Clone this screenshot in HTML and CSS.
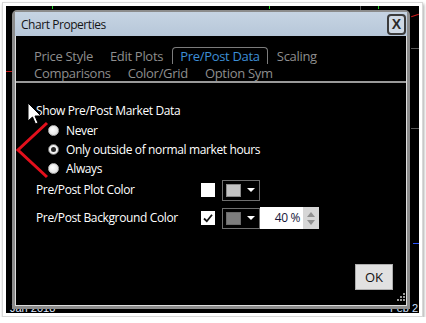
FILE: index.html
```html
<!DOCTYPE html>
<html lang="en">
<head>
    <meta charset="UTF-8">
    <meta name="viewport" content="width=device-width, initial-scale=1.0">
    <title>Chart Properties</title>
    <link rel="stylesheet" href="styles.css">
</head>
<body>
    <div class="frame">
        <div class="shot">
            <!-- chart behind the dialog -->
            <span class="mark tick" style="left: 46px;"></span>
            <span class="mark tick" style="left: 263px;"></span>
            <span class="mark tick" style="left: 372px;"></span>
            <span class="mark grid-v" style="left: 354px;"></span>
            <span class="mark red-left"></span>
            <span class="mark red-right"></span>
            <span class="mark grid-h" style="top: 42px;"></span>
            <span class="mark grid-h" style="top: 122px;"></span>
            <span class="mark blue-right"></span>
            <span class="axis-label jan">Jan 2018</span>
            <span class="axis-label feb">Feb 2</span>

            <div class="dialog">
                <div class="titlebar">
                    <span class="title">Chart Properties</span>
                    <span class="close">X</span>
                </div>
                <div class="body">
                    <div class="tabs">
                        <div class="tab-row">
                            <span class="tab">Price Style</span>
                            <span class="tab">Edit Plots</span>
                            <span class="tab active">Pre/Post Data</span>
                            <span class="tab">Scaling</span>
                        </div>
                        <div class="tab-row">
                            <span class="tab">Comparisons</span>
                            <span class="tab">Color/Grid</span>
                            <span class="tab">Option Sym</span>
                        </div>
                    </div>

                    <div class="panel">
                        <div class="heading">Show Pre/Post Market Data</div>
                        <div class="radios">
                            <div class="radio"><span class="dot"></span>Never</div>
                            <div class="radio"><span class="dot checked"></span>Only outside of normal market hours</div>
                            <div class="radio"><span class="dot"></span>Always</div>
                        </div>

                        <div class="color-row">
                            <span class="label">Pre/Post Plot Color</span>
                            <span class="check"></span>
                            <span class="picker"><span class="swatch light"></span><span class="arrow"></span></span>
                        </div>
                        <div class="color-row">
                            <span class="label">Pre/Post Background Color</span>
                            <span class="check">
                                <svg width="12" height="12" viewBox="0 0 12 12"><path d="M2 6.5 L4.8 9.2 L10 2.8" fill="none" stroke="#111" stroke-width="1.8"/></svg>
                            </span>
                            <span class="picker"><span class="swatch dark"></span><span class="arrow"></span></span>
                            <span class="spin">
                                <span class="spin-value">40 %</span>
                                <span class="spin-btns"><span class="up"></span><span class="down"></span></span>
                            </span>
                        </div>

                        <div class="actions">
                            <button class="ok">OK</button>
                        </div>
                    </div>

                    <svg class="grip" width="8" height="8" viewBox="0 0 8 8">
                        <rect x="6" y="0" width="2" height="2" fill="#9a9a9a"/>
                        <rect x="3" y="3" width="2" height="2" fill="#9a9a9a"/>
                        <rect x="6" y="3" width="2" height="2" fill="#9a9a9a"/>
                        <rect x="0" y="6" width="2" height="2" fill="#9a9a9a"/>
                        <rect x="3" y="6" width="2" height="2" fill="#9a9a9a"/>
                        <rect x="6" y="6" width="2" height="2" fill="#9a9a9a"/>
                    </svg>
                </div>
            </div>

            <!-- annotation and mouse pointer on top -->
            <svg class="overlay" width="413" height="307" viewBox="0 0 413 307">
                <polyline points="41,117 12,144 41,171" fill="none" stroke="#e3101c" stroke-width="3"/>
                <path d="M22 97 L22 115 L26.5 111 L29.5 118 L32 117 L29 110 L35 110 Z" fill="#fff" stroke="#000" stroke-width="1"/>
            </svg>
        </div>
    </div>
</body>
</html>
```

FILE: styles.css
```css
body {
    margin: 0;
    background-color: #fff;
    font-family: "Open Sans", "Noto Sans", sans-serif;
}

.frame {
    margin: 2px 0 0 2px;
    width: 413px;
    padding: 3px;
    border: 1px solid #d8d8d8;
    background-color: #fff;
    box-shadow: 1px 2px 3px rgba(0, 0, 0, 0.35);
}

.shot {
    position: relative;
    height: 307px;
    padding: 4px 0 0 6px;
    box-sizing: border-box;
    background-color: #000;
    overflow: hidden;
}

/* chart pieces */
.mark {
    position: absolute;
    display: block;
}

.tick {
    top: 0;
    width: 1px;
    height: 3px;
    background-color: #1fd21f;
}

.grid-v {
    top: 0;
    width: 1px;
    height: 5px;
    background-color: #555;
}

.grid-h {
    right: 0;
    width: 8px;
    height: 1px;
    background-color: #5a5a5a;
}

.red-left {
    left: 0;
    top: 65px;
    width: 8px;
    height: 1px;
    background-color: #c81818;
}

.red-right {
    right: 0;
    top: 9px;
    width: 8px;
    height: 1px;
    background-color: #d01c1c;
    transform: rotate(-18deg);
}

.blue-right {
    right: 0;
    top: 237px;
    width: 6px;
    height: 1px;
    background-color: #2a55ff;
}

.axis-label {
    position: absolute;
    font-family: "Liberation Sans", sans-serif;
    font-size: 11px;
    line-height: 12px;
    color: #fff;
}

.jan {
    left: 4px;
    top: 296px;
    color: #dfe6ff;
}

.feb {
    left: 384px;
    top: 296px;
    color: #cfe0ff;
}

/* dialog window */
.dialog {
    position: relative;
    z-index: 1;
    width: 392px;
    border: 3px solid #8c8c8c;
    border-top-width: 2px;
    border-radius: 5px 5px 0 0;
    background-color: #000;
}

.titlebar {
    height: 24px;
    display: flex;
    align-items: center;
    justify-content: space-between;
    padding: 0 1px 0 6px;
    background: linear-gradient(#c6d4e3, #b7c7d9);
}

.title {
    font-size: 12px;
    letter-spacing: -0.45px;
    color: #151515;
}

.close {
    width: 15px;
    height: 17px;
    border: 2px solid #3b3b3b;
    border-radius: 4px;
    background-color: #cfd9e4;
    font-family: "Liberation Sans", sans-serif;
    font-weight: bold;
    font-size: 14px;
    line-height: 17px;
    text-align: center;
    color: #2a2a2a;
}

.body {
    position: relative;
    height: 269px;
    border: 1px solid #dcdcdc;
    border-top: none;
}

.tabs {
    padding-top: 11px;
    border-bottom: 2px solid #9a9a9a;
}

.tab-row {
    display: flex;
    gap: 1px;
    padding-left: 10px;
}

.tab {
    padding: 0 7px;
    border: 1px solid transparent;
    border-bottom: none;
    border-radius: 4px 4px 0 0;
    font-size: 13px;
    letter-spacing: -0.3px;
    line-height: 16px;
    color: #8e8e8e;
}

.tab.active {
    border-color: #7c7c7c;
    color: #3d8fd6;
}

.panel {
    padding: 20px 13px 0 20px;
    color: #fff;
    font-size: 12px;
    letter-spacing: -0.37px;
    line-height: 16px;
}

.radios {
    margin: 2px 0 0 12px;
}

.radio {
    height: 19px;
    display: flex;
    align-items: center;
    gap: 7px;
}

.dot {
    width: 11px;
    height: 11px;
    border-radius: 50%;
    box-sizing: border-box;
    border: 1px solid #b4b4b4;
    background: radial-gradient(circle at 40% 40%, #fff, #d9d9d9);
    display: flex;
    align-items: center;
    justify-content: center;
}

.dot.checked {
    border-color: #6a6a6a;
    background: #f2f2f2;
}

.dot.checked::after {
    content: "";
    width: 5px;
    height: 5px;
    border-radius: 50%;
    background-color: #262626;
}

.color-row {
    height: 22px;
    margin-top: 6px;
    display: flex;
    align-items: center;
}

.radios + .color-row {
    margin-top: 1px;
}

.label {
    width: 165px;
}

.check {
    width: 14px;
    height: 14px;
    margin-right: 7px;
    background-color: #fff;
    display: flex;
    align-items: center;
    justify-content: center;
}

.picker {
    width: 38px;
    height: 21px;
    box-sizing: border-box;
    border: 1px solid #6f6f6f;
    display: flex;
    align-items: center;
    padding-left: 3px;
    gap: 6px;
}

.swatch {
    width: 15px;
    height: 13px;
    box-sizing: border-box;
    border: 1px solid #8a8a8a;
}

.swatch.light {
    background-color: #c3c3c3;
}

.swatch.dark {
    background-color: #7d7d7d;
    border-color: #6a6a6a;
}

.arrow {
    width: 0;
    height: 0;
    border-left: 4px solid transparent;
    border-right: 4px solid transparent;
    border-top: 4px solid #fff;
}

.spin {
    height: 22px;
    display: flex;
}

.spin-value {
    width: 43px;
    box-sizing: border-box;
    padding-right: 3px;
    background-color: #fff;
    color: #16163a;
    font-size: 12px;
    line-height: 22px;
    text-align: right;
}

.spin-btns {
    width: 16px;
    background-color: #d6d6d6;
    display: flex;
    flex-direction: column;
    align-items: center;
    justify-content: space-around;
    padding: 3px 0;
    box-sizing: border-box;
}

.up {
    border-left: 4px solid transparent;
    border-right: 4px solid transparent;
    border-bottom: 5px solid #8f8f8f;
}

.down {
    border-left: 4px solid transparent;
    border-right: 4px solid transparent;
    border-top: 5px solid #8f8f8f;
}

.actions {
    display: flex;
    justify-content: flex-end;
    margin-top: 35px;
}

.ok {
    width: 38px;
    height: 26px;
    padding: 0;
    border: 1px solid #adadad;
    background-color: #e1e1e1;
    font-family: "Open Sans", sans-serif;
    font-size: 13px;
    color: #111;
}

.grip {
    position: absolute;
    right: 1px;
    bottom: 4px;
}

.overlay {
    position: absolute;
    left: 0;
    top: 0;
    z-index: 2;
}
```
